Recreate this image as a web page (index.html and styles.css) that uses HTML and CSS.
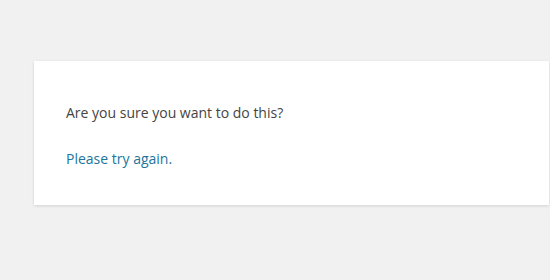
FILE: index.html
```html
<!DOCTYPE html>
<html>
<head>
<meta charset="utf-8">
<link rel="stylesheet" href="styles.css">
</head>
<body class="error-page">
<p class="msg">Are you sure you want to do this?</p>
<p class="msg"><a class="link" href="#">Please try again.</a></p>
</body>
</html>
```
FILE: styles.css
```css
html {
  background: #f1f1f1;
}
body.error-page {
  margin: 61px 1px 0 34px;
  padding: 16px 32px;
  background: #fff;
  color: #444;
  font-family: "Open Sans", sans-serif;
  box-shadow: 0 1px 3px rgba(0, 0, 0, 0.13);
}
.msg {
  font-size: 14px;
  line-height: 1.5;
  margin: 25px 0 20px;
}
.link {
  color: #21759b;
  text-decoration: none;
}
```
